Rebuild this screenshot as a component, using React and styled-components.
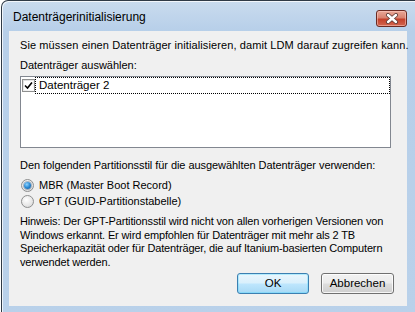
import React from "react";
import styled, { createGlobalStyle, css } from "styled-components";

const GlobalStyle = createGlobalStyle`
  html, body { margin: 0; padding: 0; background: #ffffff; overflow: hidden; }
  body { width: 415px; height: 312px; }
  * { box-sizing: border-box; }
`;

const FONT = `"Liberation Sans", Arial, sans-serif`;

const Window = styled.div`
  margin-left: 1px;
  width: 422px;
  height: 330px;
  border: 1px solid #2f3a46;
  border-bottom: none;
  border-radius: 7px 7px 0 0;
  background: linear-gradient(180deg, #c9dbee 0px, #b7cfe9 30px, #b9d1ea 100%);
  box-shadow: inset 1px 1px 0 rgba(255, 255, 255, 0.75);
  display: flex;
  flex-direction: column;
  padding: 0 0 0 7px;
  font-family: ${FONT};
`;

const TitleBar = styled.div`
  height: 30px;
  display: flex;
  align-items: center;
  padding-left: 4px;
  width: 399px;
`;

const TitleText = styled.div`
  flex: 1;
  font-size: 12px;
  color: #000;
  padding-top: 1px;
`;

const CloseButton = styled.div`
  width: 31px;
  height: 17px;
  margin-top: 5px;
  margin-right: 1px;
  border: 1px solid #6b2a22;
  border-radius: 3px;
  background: linear-gradient(180deg, #e9a898 0%, #d98270 45%, #c4412b 55%, #d2654f 100%);
  box-shadow: inset 0 0 0 1px rgba(255, 210, 200, 0.5);
  display: flex;
  align-items: center;
  justify-content: center;
`;

const Client = styled.div`
  width: 398px;
  height: 275px;
  background: #f0f0f0;
  padding: 7px 13px 12px 11px;
  display: flex;
  flex-direction: column;
  font-size: 11px;
  line-height: 14px;
  color: #000;
`;

const Text = styled.div`
  margin-top: ${(p) => p.$mt || 0}px;
  line-height: ${(p) => p.$lh || 14}px;
  letter-spacing: ${(p) => p.$ls || 0}px;
  white-space: nowrap;
`;

const ListBox = styled.div`
  margin-top: 4px;
  width: 371px;
  height: 72px;
  background: #fff;
  border: 1px solid #828790;
  padding: 0;
`;

const ListItem = styled.div`
  display: flex;
  align-items: center;
  height: 17px;
  padding-left: 1px;
`;

const CheckBoxBox = styled.div`
  width: 13px;
  height: 13px;
  border: 1px solid #8e8f8f;
  background: linear-gradient(135deg, #dcdcdc, #fbfbfb);
  display: flex;
  align-items: center;
  justify-content: center;
  padding: 1px;
  flex: none;
`;

const CheckInner = styled.div`
  width: 9px;
  height: 9px;
  background: #ffffff;
  display: flex;
  align-items: center;
  justify-content: center;
`;

const FocusLabel = styled.div`
  flex: 1;
  height: 17px;
  border: 1px dotted #000;
  padding-left: 3px;
  line-height: 15px;
  font-size: 11.5px;
`;

const RadioRow = styled.div`
  display: flex;
  align-items: center;
  height: 16px;
  margin-top: ${(p) => p.$mt || 0}px;
  padding-left: 1px;
`;

const Radio = styled.div`
  width: 13px;
  height: 13px;
  border-radius: 50%;
  border: 1px solid #8e8f8f;
  background: radial-gradient(circle at 40% 35%, #ffffff 0%, #e6e6e6 60%, #cfcfcf 100%);
  display: flex;
  align-items: center;
  justify-content: center;
  margin-right: 5px;
  flex: none;
`;

const RadioDot = styled.div`
  width: 7px;
  height: 7px;
  border-radius: 50%;
  background: radial-gradient(circle at 40% 35%, #8fd3ff 0%, #2a8ad4 50%, #0d4f92 100%);
  box-shadow: 0 0 0 1px rgba(30, 60, 100, 0.35);
`;

const ButtonRow = styled.div`
  margin-top: 3px;
  display: flex;
  justify-content: flex-end;
  gap: 12px;
`;

const Button = styled.div`
  width: ${(p) => p.$w}px;
  height: 21px;
  border-radius: 3px;
  border: 1px solid #707070;
  background: linear-gradient(180deg, #f2f2f2 0%, #ebebeb 48%, #dddddd 52%, #cfcfcf 100%);
  box-shadow: inset 0 0 0 1px rgba(255, 255, 255, 0.8);
  display: flex;
  align-items: center;
  justify-content: center;
  font-size: 11.5px;
  ${(p) =>
    p.$default &&
    css`
      border-color: #3c7fb1;
      background: linear-gradient(180deg, #eaf6fd 0%, #d9f0fc 48%, #bee6fd 52%, #a7d9f5 100%);
      box-shadow: inset 0 0 0 1px #47d8ff55;
    `}
`;

export default function App() {
  return (
    <>
      <GlobalStyle />
      <Window>
        <TitleBar>
          <TitleText>Datenträgerinitialisierung</TitleText>
          <CloseButton>
            <svg width="14" height="11" viewBox="0 0 14 11">
              <path d="M3 2 L11 9 M11 2 L3 9" stroke="#5a3a36" strokeWidth="4" strokeLinecap="round" />
              <path d="M3 2 L11 9 M11 2 L3 9" stroke="#ffffff" strokeWidth="2.4" strokeLinecap="round" />
            </svg>
          </CloseButton>
        </TitleBar>
        <Client>
          <Text $ls={0.1}>Sie müssen einen Datenträger initialisieren, damit LDM darauf zugreifen kann.</Text>
          <Text $mt={6}>Datenträger auswählen:</Text>
          <ListBox>
            <ListItem>
              <CheckBoxBox>
                <CheckInner>
                  <svg width="9" height="9" viewBox="0 0 9 9">
                    <path d="M1 4.5 L3.5 7 L8 1.5" stroke="#000" strokeWidth="1.6" fill="none" />
                  </svg>
                </CheckInner>
              </CheckBoxBox>
              <FocusLabel>Datenträger 2</FocusLabel>
            </ListItem>
          </ListBox>
          <Text $mt={10} $ls={-0.06}>
            Den folgenden Partitionsstil für die ausgewählten Datenträger verwenden:
          </Text>
          <RadioRow $mt={5}>
            <Radio>
              <RadioDot />
            </Radio>
            MBR (Master Boot Record)
          </RadioRow>
          <RadioRow>
            <Radio />
            GPT (GUID-Partitionstabelle)
          </RadioRow>
          <Text $mt={6} $lh={13.7} $ls={-0.15}>
            Hinweis: Der GPT-Partitionsstil wird nicht von allen vorherigen Versionen von
            <br />
            Windows erkannt. Er wird empfohlen für Datenträger mit mehr als 2 TB
            <br />
            Speicherkapazität oder für Datenträger, die auf Itanium-basierten Computern
            <br />
            verwendet werden.
          </Text>
          <ButtonRow>
            <Button $w={72} $default>
              OK
            </Button>
            <Button $w={73}>Abbrechen</Button>
          </ButtonRow>
        </Client>
      </Window>
    </>
  );
}
